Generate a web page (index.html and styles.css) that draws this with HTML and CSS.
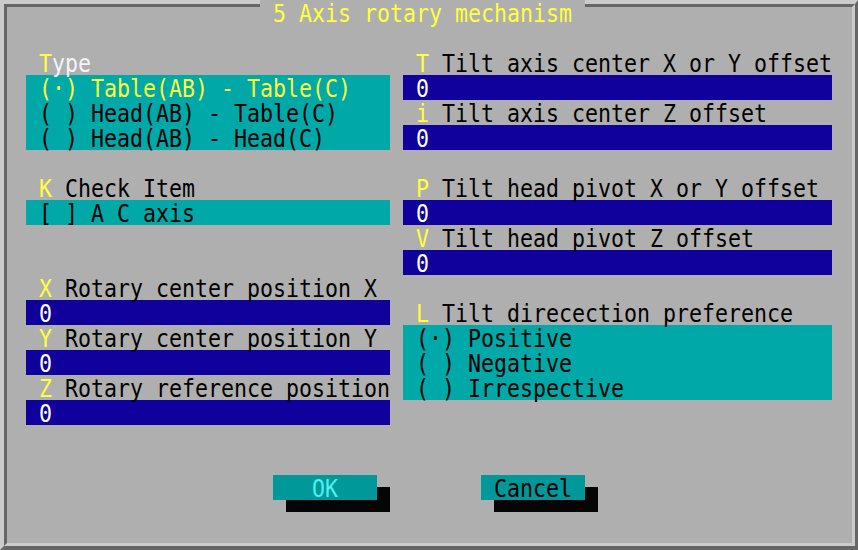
FILE: index.html
```html
<!DOCTYPE html>
<html lang="en">
<head>
    <meta charset="UTF-8">
    <title>5 Axis rotary mechanism</title>
    <link rel="stylesheet" href="styles.css">
</head>
<body>

<div class="screen">
    <div class="title"><span>5 Axis rotary mechanism</span></div>
    <div class="frame">
        <div class="cols">
            <div class="col">
                <div class="label"><b>T</b><span class="focus">ype</span></div>
                <div class="choice">
                    <div class="line on"><span>(·) Table(AB) - Table(C)</span></div>
                    <div class="line"><span>( ) Head(AB) - Table(C)</span></div>
                    <div class="line"><span>( ) Head(AB) - Head(C)</span></div>
                </div>
                <div class="blank"></div>
                <div class="label"><b>K</b><span> Check Item</span></div>
                <div class="choice">
                    <div class="line"><span>[ ] A C axis</span></div>
                </div>
                <div class="blank"></div>
                <div class="blank"></div>
                <div class="label"><b>X</b><span> Rotary center position X</span></div>
                <div class="field"><span>0</span></div>
                <div class="label"><b>Y</b><span> Rotary center position Y</span></div>
                <div class="field"><span>0</span></div>
                <div class="label"><b>Z</b><span> Rotary reference position</span></div>
                <div class="field"><span>0</span></div>
            </div>

            <div class="col">
                <div class="label"><b>T</b><span> Tilt axis center X or Y offset</span></div>
                <div class="field"><span>0</span></div>
                <div class="label"><b>i</b><span> Tilt axis center Z offset</span></div>
                <div class="field"><span>0</span></div>
                <div class="blank"></div>
                <div class="label"><b>P</b><span> Tilt head pivot X or Y offset</span></div>
                <div class="field"><span>0</span></div>
                <div class="label"><b>V</b><span> Tilt head pivot Z offset</span></div>
                <div class="field"><span>0</span></div>
                <div class="blank"></div>
                <div class="label"><b>L</b><span> Tilt direcection preference</span></div>
                <div class="choice">
                    <div class="line"><span>(·) Positive</span></div>
                    <div class="line"><span>( ) Negative</span></div>
                    <div class="line"><span>( ) Irrespective</span></div>
                </div>
            </div>
        </div>

        <div class="buttons">
            <div class="btn ok"><span>OK</span></div>
            <div class="btn"><span>Cancel</span></div>
        </div>
    </div>
</div>

</body>
</html>
```

FILE: styles.css
```css
body {
    margin: 0;
    background-color: #afafaf;
    font-family: "DejaVu Sans Mono", monospace;
    font-size: 21.6px;
    line-height: 25px;
    color: #000;
}
.screen {
    position: relative;
    box-sizing: border-box;
    width: 858px;
    height: 550px;
    border-style: solid;
    border-width: 4px 3px 4px 4px;
    border-color: #cbcbcb #666666 #666666 #cbcbcb;
}
.frame {
    box-sizing: border-box;
    height: 100%;
    border-style: solid;
    border-width: 3px 3px 3px 3px;
    border-color: #666666 #cbcbcb #cbcbcb #666666;
}
.title {
    position: absolute;
    top: -4px;
    left: 256px;
    width: 299px;
    height: 25px;
    padding: 0 13px;
    background-color: #afafaf;
    color: #ffff3c;
}

/* text-mode glyphs are taller than the font, stretch them a bit */
.title span,
.label b,
.label span,
.line span,
.field span,
.btn span {
    display: inline-block;
    white-space: pre;
    line-height: 21px;
    transform: translateY(1px) scaleY(1.14);
}

.cols {
    display: grid;
    grid-template-columns: 364px 429px;
    column-gap: 13px;
    padding: 43px 0 0 19px;
}
.col {
    display: flex;
    flex-direction: column;
}
.label,
.line,
.field,
.blank {
    height: 25px;
    padding-left: 13px;
    white-space: pre;
}
.label b {
    font-weight: normal;
    color: #ffff3c;
}
.label .focus {
    color: #f4f4f4;
}
.choice {
    background-color: #00a8a8;
}
.line.on {
    color: #ffff3c;
}
.field {
    background-color: #10009c;
    color: #fff;
}

.buttons {
    display: flex;
    justify-content: center;
    gap: 104px;
    margin-top: 50px;
    padding-right: 1px;
}
.btn {
    width: 104px;
    height: 25px;
    text-align: center;
    background-color: #009898;
    box-shadow: 13px 12px 0 #050505;
}
.btn.ok {
    color: #4ef0f0;
}
```
